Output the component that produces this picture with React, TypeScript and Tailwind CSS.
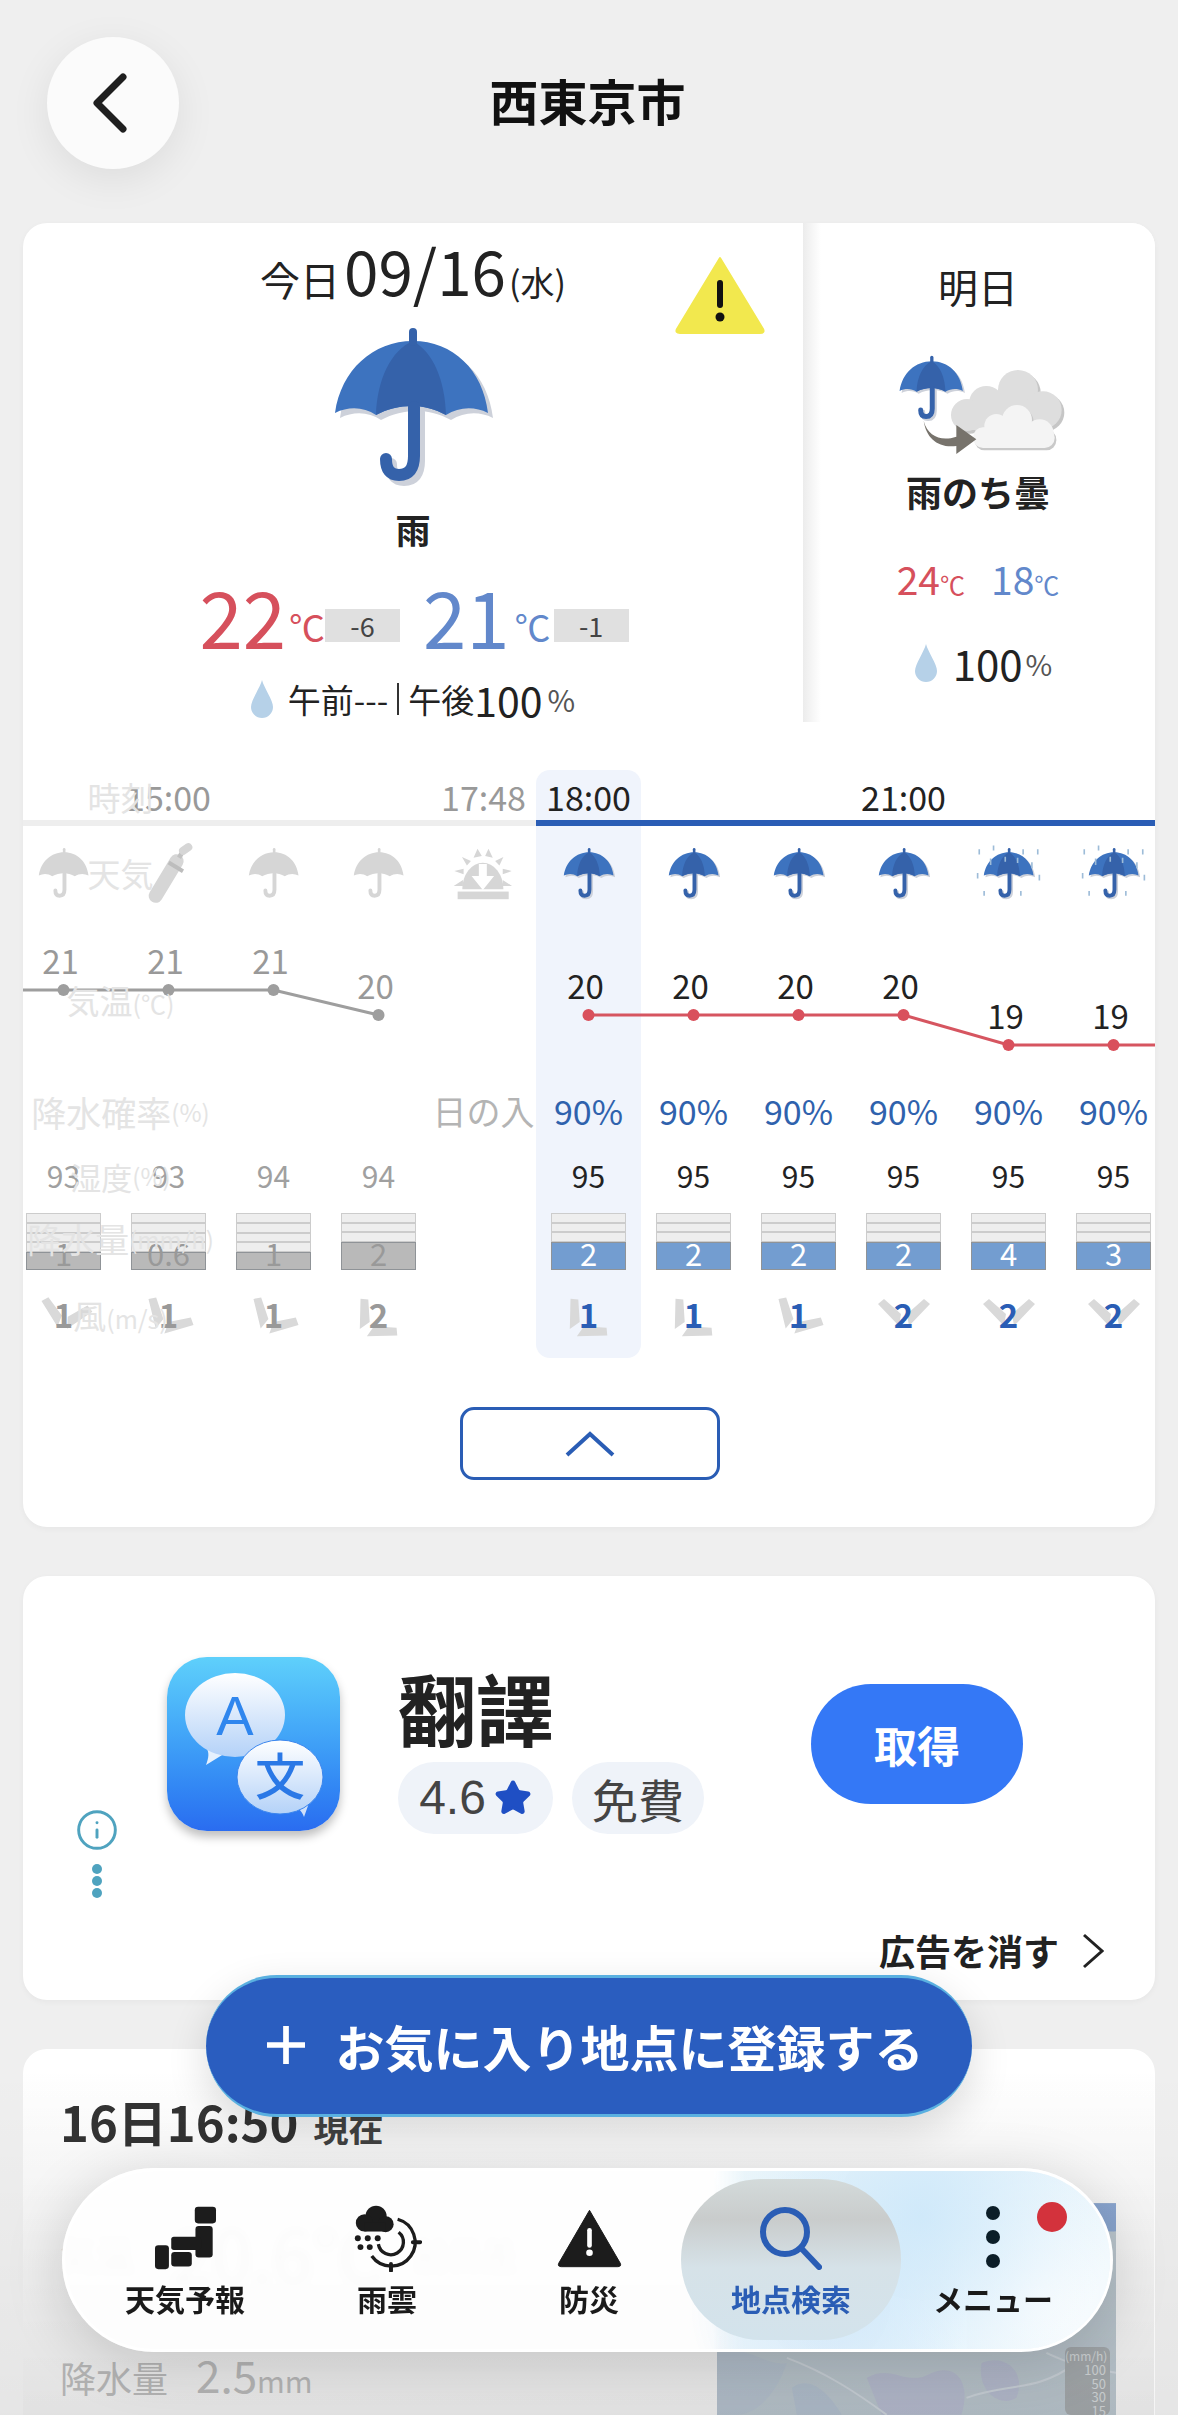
import React from 'react';
import { Star, Info } from 'lucide-react';

type Hour = {
  time?: string;
  icon: 'umbrella' | 'bottle' | 'sunset' | 'storm';
  temp?: number;
  prob?: string;
  humid?: number;
  rain?: string;
  fill?: 1 | 2;
  wind?: number;
  windClass?: string;
  past: boolean;
};

const hours: Hour[] = [
  { icon: 'umbrella', temp: 21, humid: 93, rain: '1', fill: 1, wind: 1, windClass: 'rotate-[12deg] translate-y-[2px]', past: true },
  { time: '15:00', icon: 'bottle', temp: 21, humid: 93, rain: '0.6', fill: 1, wind: 1, windClass: 'rotate-[30deg] -translate-x-[5px] translate-y-[6px]', past: true },
  { icon: 'umbrella', temp: 21, humid: 94, rain: '1', fill: 1, wind: 1, windClass: 'rotate-[30deg] -translate-x-[5px] translate-y-[6px]', past: true },
  { icon: 'umbrella', temp: 20, humid: 94, rain: '2', fill: 2, wind: 2, windClass: 'rotate-[45deg] -translate-x-[10px] translate-y-[9px]', past: true },
  { time: '17:48', icon: 'sunset', prob: '日の入', past: true },
  { time: '18:00', icon: 'umbrella', temp: 20, prob: '90%', humid: 95, rain: '2', fill: 2, wind: 1, windClass: 'rotate-[45deg] -translate-x-[10px] translate-y-[9px]', past: false },
  { icon: 'umbrella', temp: 20, prob: '90%', humid: 95, rain: '2', fill: 2, wind: 1, windClass: 'rotate-[45deg] -translate-x-[10px] translate-y-[9px]', past: false },
  { icon: 'umbrella', temp: 20, prob: '90%', humid: 95, rain: '2', fill: 2, wind: 1, windClass: 'rotate-[30deg] -translate-x-[5px] translate-y-[6px]', past: false },
  { time: '21:00', icon: 'umbrella', temp: 20, prob: '90%', humid: 95, rain: '2', fill: 2, wind: 2, windClass: '', past: false },
  { icon: 'storm', temp: 19, prob: '90%', humid: 95, rain: '4', fill: 2, wind: 2, windClass: '', past: false },
  { icon: 'storm', temp: 19, prob: '90%', humid: 95, rain: '3', fill: 2, wind: 2, windClass: '', past: false },
];

// y of the temperature dot inside the chart row
const dotY = (t: number) => (t === 21 ? 70 : t === 20 ? 95 : 125);

const UmbrellaShapes = ({ grey = false }: { grey?: boolean }) => {
  const canopy = 'M24 103C30 60 62 31 102 31C142 31 172 60 177 103C163 96 148 97 135 105C124 99 112 96 101 96C89 96 76 99 65 105C53 97 38 96 24 103Z';
  const panel = 'M102 31C80 40 66 70 65 105C76 99 89 96 101 96C112 96 124 99 135 105C134 70 122 42 102 31Z';
  const handle = 'M103 97V146Q103 165 88 165Q75 165 75 149';
  const stem = 'M102 22V32';
  if (grey) {
    return (
      <g>
        <path d={canopy} fill="#d6d6d6" />
        <path d={stem} stroke="#d6d6d6" strokeWidth="8" strokeLinecap="round" />
        <path d={handle} fill="none" stroke="#d6d6d6" strokeWidth="12" strokeLinecap="round" />
      </g>
    );
  }
  return (
    <g>
      <path d={canopy} fill="#cdd1da" transform="translate(5 5)" />
      <path d={handle} fill="none" stroke="#cdd1da" strokeWidth="12" strokeLinecap="round" transform="translate(5 5)" />
      <path d={canopy} fill="#3d73bf" />
      <path d={panel} fill="#3562aa" />
      <path d={stem} stroke="#3562aa" strokeWidth="8" strokeLinecap="round" />
      <path d={handle} fill="none" stroke="#3562aa" strokeWidth="12" strokeLinecap="round" />
    </g>
  );
};

const Umbrella = ({ className, grey }: { className: string; grey?: boolean }) => (
  <svg viewBox="0 0 200 190" className={className}>
    <UmbrellaShapes grey={grey} />
  </svg>
);

const StormUmbrella = () => (
  <svg viewBox="0 0 200 190" className="w-[65px] h-[62px]">
    <UmbrellaShapes />
    <g stroke="#9dbcd8" strokeWidth="5">
      <path d="M10 22V38M54 10V26M145 22V38M190 22V38M5 95V112M25 150V165M138 150V165M195 100V118M45 50V70M90 45V60M128 48V64M172 62V80" />
    </g>
  </svg>
);

const Bottle = () => (
  <svg viewBox="10 55 150 200" className="w-[50px] h-[67px]">
    <path d="M45 222L108 118" stroke="#d6d6d6" strokeWidth="42" strokeLinecap="round" />
    <path d="M115 108L126 90" stroke="#c2c2c2" strokeWidth="14" />
    <path d="M127 87L143 76" stroke="#d6d6d6" strokeWidth="24" strokeLinecap="round" />
    <path d="M84 122L127 148" stroke="#bdbdbd" strokeWidth="12" />
  </svg>
);

const Sunset = () => (
  <svg viewBox="935 70 190 165" className="w-[63px] h-[55px]">
    <g fill="#d6d6d6">
      <path d="M966 200A62 80 0 0 1 1090 200Z" />
      <rect x="952" y="207" width="154" height="23" />
      <path d="M1012 78L1000 105L1025 100ZM1045 78L1035 100L1058 105ZM965 103L992 115L980 128ZM1090 103L1065 115L1078 128ZM942 145L970 138L970 155ZM1115 145L1088 138L1088 155ZM940 190L968 172L968 190ZM1116 190L1088 172L1088 190Z" />
    </g>
    <path d="M1016 124H1040V160H1062L1028 202L994 160H1016Z" fill="#fff" />
  </svg>
);

const Drop = ({ className }: { className: string }) => (
  <svg viewBox="0 0 22 38" className={className}>
    <path d="M11 0C13 8 22 20 22 27A11 11 0 0 1 0 27C0 20 9 8 11 0Z" fill="#b6d1e8" />
  </svg>
);

const TomorrowIcon = () => (
  <svg viewBox="0 0 630 390" className="w-[210px] h-[130px]">
    <g transform="translate(50 25) scale(1.24)">
      <UmbrellaShapes />
    </g>
    <g fill="#c6c6c6" transform="translate(8 8)">
      <circle cx="435" cy="150" r="60" />
      <circle cx="340" cy="190" r="52" />
      <circle cx="510" cy="210" r="56" />
      <circle cx="282" cy="225" r="48" />
      <rect x="290" y="190" width="220" height="80" />
    </g>
    <g fill="#dedede">
      <circle cx="435" cy="150" r="60" />
      <circle cx="340" cy="190" r="52" />
      <circle cx="510" cy="210" r="56" />
      <circle cx="282" cy="225" r="48" />
      <rect x="290" y="190" width="220" height="80" />
    </g>
    <g fill="#c9c9c9" transform="translate(5 7)">
      <circle cx="432" cy="240" r="45" />
      <rect x="300" y="262" width="245" height="62" rx="30" />
    </g>
    <g fill="#f4f4f4">
      <circle cx="432" cy="240" r="45" />
      <circle cx="370" cy="258" r="36" />
      <circle cx="500" cy="280" r="42" />
      <rect x="300" y="262" width="245" height="62" rx="30" />
    </g>
    <path d="M152 243C165 290 205 305 250 290L250 255L310 298L250 342L250 318C195 325 160 295 152 243Z" fill="#77736c" />
  </svg>
);

const WindIcon = ({ value, cls, past }: { value: number; cls: string; past: boolean }) => (
  <div className="relative w-[64px] h-[64px] flex items-center justify-center">
    <svg viewBox="0 0 64 64" className={`absolute inset-0 w-[64px] h-[64px] ${cls}`}>
      <path d="M6 18L12 13L29 28L27 40ZM58 18L52 13L35 28L37 40Z" fill="#d9d9d9" />
    </svg>
    <span className={`relative -translate-y-[4px] text-[33px] font-bold leading-none ${past ? 'text-[#999999]' : 'text-[#2a5db5]'}`}>{value}</span>
  </div>
);

const RainBar = ({ hour }: { hour: Hour }) => (
  <div className="relative w-[75px] h-[57px] flex flex-col">
    <div className="flex-1 flex flex-col">
      {Array.from({ length: hour.fill === 1 ? 4 : 3 }).map((_, i) => (
        <div key={i} className="flex-1 bg-[#eeeeee] border border-[#cccccc]" />
      ))}
    </div>
    <div className={`${hour.fill === 1 ? 'h-[18px]' : 'h-[28px]'} border border-[#8f9397] ${hour.past ? 'bg-[#b9b9b9]' : 'bg-[#739dd0]'}`} />
    <div className={`absolute left-0 right-0 bottom-[3px] h-[30px] flex items-center justify-center text-[31px] leading-none ${hour.past ? 'text-[#999999]' : 'text-white'}`}>
      {hour.rain}
    </div>
  </div>
);

const HourColumn = ({ hour, selected }: { hour: Hour; selected: boolean }) => (
  <div className={`w-[105px] shrink-0 flex flex-col items-center ${selected ? 'bg-[#f0f4fc] rounded-[14px]' : ''}`}>
    <div className={`w-full h-[56px] pb-[1px] flex items-end justify-center border-b-[6px] text-[34px] leading-[44px] ${hour.past ? 'border-[#eeeeee] text-[#999999]' : 'border-[#2a5db5] text-[#222222]'}`}>
      {hour.time}
    </div>
    <div className="h-[94px] flex items-center justify-center">
      {hour.icon === 'umbrella' && <Umbrella className="w-[65px] h-[62px]" grey={hour.past} />}
      {hour.icon === 'storm' && <StormUmbrella />}
      {hour.icon === 'bottle' && <Bottle />}
      {hour.icon === 'sunset' && <Sunset />}
    </div>
    <div className="relative w-full h-[165px]">
      {hour.temp !== undefined && (
        <div
          className={`absolute left-0 right-0 -translate-x-[3px] -translate-y-1/2 text-center text-[33px] leading-none ${hour.past ? 'text-[#999999]' : 'text-[#222222]'}`}
          style={{ top: dotY(hour.temp) - 30 }}
        >
          {hour.temp}
        </div>
      )}
    </div>
    <div className={`h-[58px] pb-[6px] flex items-center whitespace-nowrap text-[34px] leading-none ${hour.past ? 'text-[#b4b4b4]' : 'text-[#2f62ad]'}`}>
      {hour.prob}
    </div>
    <div className={`h-[70px] pb-[6px] flex items-center text-[30px] leading-none ${hour.past ? 'text-[#a0a0a0]' : 'text-[#222222]'}`}>
      {hour.humid}
    </div>
    <div className="h-[57px]">{hour.rain && <RainBar hour={hour} />}</div>
    <div className="h-[88px] pt-[16px]">
      {hour.wind !== undefined && <WindIcon value={hour.wind} cls={hour.windClass ?? ''} past={hour.past} />}
    </div>
  </div>
);

const TempChart = () => {
  const x = (i: number) => 52.5 + i * 105;
  return (
    <svg viewBox="0 0 1155 165" className="absolute left-0 top-[150px] w-[1155px] h-[165px] pointer-events-none">
      <polyline points={`0,70 ${x(0)},70 ${x(1)},70 ${x(2)},70 ${x(3)},95`} fill="none" stroke="#9e9e9e" strokeWidth="3" />
      <polyline points={`${x(5)},95 ${x(6)},95 ${x(7)},95 ${x(8)},95 ${x(9)},125 ${x(10)},125 1155,125`} fill="none" stroke="#d65560" strokeWidth="3" />
      {[0, 1, 2, 3].map((i) => (
        <circle key={i} cx={x(i)} cy={dotY(hours[i].temp ?? 0)} r="6" fill="#9e9e9e" />
      ))}
      {[5, 6, 7, 8, 9, 10].map((i) => (
        <circle key={i} cx={x(i)} cy={dotY(hours[i].temp ?? 0)} r="6" fill="#d9505c" />
      ))}
    </svg>
  );
};

// sticky row labels, they sit faintly on top of the scrolled columns
const RowLabels = () => (
  <div className="absolute left-0 top-[48px] w-[195px] flex flex-col items-center text-[#e4e4e4] pointer-events-none leading-none whitespace-nowrap">
    <div className="h-[56px] pb-[12px] flex items-end text-[33px]">時刻</div>
    <div className="h-[94px] flex items-center text-[33px]">天気</div>
    <div className="h-[165px] pt-[64px] text-[33px]">
      気温<span className="text-[25px]">(℃)</span>
    </div>
    <div className="h-[58px] pb-[5px] flex items-center text-[35px]">
      降水確率<span className="text-[24px]">(%)</span>
    </div>
    <div className="h-[70px] pb-[4px] flex items-center text-[31px]">
      湿度<span className="text-[24px]">(%)</span>
    </div>
    <div className="h-[57px] pb-[5px] flex items-center text-[34px]">
      降水量<span className="text-[24px]">(mm/h)</span>
    </div>
    <div className="h-[88px] pt-[29px] text-[33px]">
      風<span className="text-[25px]">(m/s)</span>
    </div>
  </div>
);

const ForecastIcon = () => (
  <svg viewBox="70 80 190 195" className="w-[63px] h-[65px]" fill="#1c1c1c">
    <rect x="193" y="82" width="64" height="50" rx="10" />
    <rect x="195" y="140" width="52" height="95" rx="10" />
    <rect x="122" y="172" width="90" height="40" rx="8" />
    <rect x="122" y="218" width="62" height="44" rx="10" />
    <rect x="73" y="198" width="42" height="72" rx="10" />
  </svg>
);

const RadarIcon = () => (
  <svg viewBox="665 75 210 205" className="w-[70px] h-[68px]">
    <g fill="#1c1c1c">
      <circle cx="737" cy="112" r="32" />
      <circle cx="702" cy="132" r="26" />
      <circle cx="766" cy="136" r="24" />
      <rect x="702" y="130" width="64" height="28" />
      <circle cx="682" cy="178" r="9" />
      <circle cx="712" cy="178" r="9" />
      <circle cx="742" cy="178" r="9" />
      <circle cx="690" cy="205" r="9" />
      <circle cx="718" cy="205" r="9" />
    </g>
    <g fill="none" stroke="#1c1c1c" strokeWidth="10">
      <path d="M802 121A72 72 0 1 1 724 232" />
      <path d="M805 160A38 38 0 1 1 744 196" />
      <path d="M848 190H870M782 256V276" strokeLinecap="round" strokeWidth="12" />
    </g>
  </svg>
);

const WarnIcon = () => (
  <svg viewBox="1275 88 200 178" className="w-[67px] h-[59px]">
    <path d="M1375 92L1468 252Q1472 262 1460 262H1290Q1278 262 1282 252Z" fill="#1c1c1c" stroke="#1c1c1c" strokeLinejoin="round" strokeWidth="3" />
    <rect x="1368" y="145" width="14" height="60" rx="7" fill="#fff" />
    <circle cx="1375" cy="220" r="10" fill="#fff" />
  </svg>
);

const SearchIcon = () => (
  <svg viewBox="0 0 66 66" className="w-[66px] h-[66px] -ml-[5px] -mt-[3px]" fill="none" stroke="#2a5db5" strokeWidth="6" strokeLinecap="round">
    <circle cx="29" cy="28" r="22" />
    <path d="M45 44L63 63" />
  </svg>
);

const navItems = [
  { label: '天気予報', icon: <ForecastIcon /> },
  { label: '雨雲', icon: <RadarIcon /> },
  { label: '防災', icon: <WarnIcon /> },
  { label: '地点検索', icon: <SearchIcon />, active: true },
  {
    label: 'メニュー',
    icon: (
      <div className="flex flex-col gap-[10px] -mt-[2px]">
        <span className="w-[14px] h-[14px] rounded-full bg-[#0c1e28]" />
        <span className="w-[14px] h-[14px] rounded-full bg-[#0c1e28]" />
        <span className="w-[14px] h-[14px] rounded-full bg-[#0c1e28]" />
      </div>
    ),
  },
];

const BottomNav = () => (
  <div className="absolute left-[62px] top-[2168px] w-[1051px] h-[184px] rounded-[92px] border-[3px] border-white/90 bg-white/90 backdrop-blur-[3px] shadow-[0_10px_60px_rgba(0,0,0,0.16)] overflow-hidden">
    <div className="absolute inset-0 bg-[linear-gradient(90deg,rgba(234,245,250,0)_62%,rgba(234,245,250,0.95)_65%,rgba(232,245,252,1)_100%)]" />
    <div className="absolute inset-0 bg-[radial-gradient(circle_at_82%_25%,rgba(205,232,250,0.9),rgba(205,232,250,0)_22%),radial-gradient(circle_at_73%_75%,rgba(212,232,250,0.9),rgba(212,232,250,0)_18%),radial-gradient(circle_at_93%_70%,rgba(255,255,255,0.9),rgba(255,255,255,0)_16%)]" />
    <div className="relative flex h-full pl-[19px]">
      {navItems.map((item) => (
        <div key={item.label} className="relative w-[202px] flex flex-col items-center pt-[34px]">
          {item.active && (
            <div className="absolute left-[-9px] top-[8px] w-[220px] h-[161px] rounded-[80px] bg-[linear-gradient(180deg,#d3dada,#c9cccc_25%,#d6e2e8_55%,#d3e3ec)]" />
          )}
          <div className="relative h-[66px] flex items-center justify-center">{item.icon}</div>
          <div className={`relative mt-[7px] text-[30px] font-bold leading-[40px] ${item.active ? 'text-[#2a5db5]' : 'text-[#1a1a1a]'}`}>{item.label}</div>
        </div>
      ))}
    </div>
    <span className="absolute left-[972px] top-[31px] w-[30px] h-[30px] rounded-full bg-[#d3323c]" />
  </div>
);

const RadarMap = () => (
  <div className="relative w-[400px] h-[212px] mt-[29px] overflow-hidden bg-[#c4d0d8]">
    <svg viewBox="0 0 400 212" className="absolute inset-0 w-full h-full">
      <path d="M0 150C30 140 50 165 70 160C60 190 40 212 20 212H0Z" fill="#bfccd9" />
      <path d="M75 185C95 170 115 195 125 212H80Z" fill="#bccad9" />
      <path d="M150 175C175 160 190 185 215 170C240 160 255 180 245 212H165Z" fill="#c0c6da" />
      <path d="M265 160C290 150 310 170 300 195C285 205 260 190 265 160Z" fill="#c0c6da" />
      <path d="M340 0H400V28C380 30 350 20 340 0Z" fill="#8facd8" />
      <path d="M70 155C110 170 140 190 170 212M250 195C290 180 320 190 360 160M330 150C350 160 370 165 400 170" fill="none" stroke="#d7dfe6" strokeWidth="2" />
    </svg>
    <div className="absolute right-[6px] top-[144px] w-[45px] h-[68px] rounded-[6px] bg-[#adb2b5] text-[13px] leading-[13.5px] text-[#dfe2e4] text-right pr-[4px] pt-[2px]">
      <div className="text-[12px] leading-[14px]">(mm/h)</div>
      <div>100</div>
      <div>50</div>
      <div>30</div>
      <div>15</div>
    </div>
  </div>
);

const TranslateIcon = () => (
  <div className="w-[173px] h-[174px] rounded-[40px] bg-gradient-to-b from-[#5fd0fb] to-[#2a6cf0] shadow-[0_6px_10px_rgba(0,0,0,0.25)]">
    <svg viewBox="0 0 173 174" className="w-[173px] h-[174px]">
      <defs>
        <linearGradient id="bubble" x1="0" y1="0" x2="0" y2="1">
          <stop offset="0" stopColor="#ffffff" />
          <stop offset="1" stopColor="#b4d2f8" />
        </linearGradient>
      </defs>
      <path d="M39 108C42 100 42 96 40 92L60 95Z" fill="#e6f1fd" />
      <ellipse cx="68" cy="58" rx="50" ry="42" fill="url(#bubble)" />
      <text x="68" y="78" textAnchor="middle" fontSize="56" fontFamily="'Liberation Sans', sans-serif" fill="#2f86ee">A</text>
      <path d="M137 160C135 154 130 150 126 146L142 146Z" fill="#cfe0fa" />
      <ellipse cx="113" cy="120" rx="43" ry="37" fill="url(#bubble)" stroke="#3b86ee" strokeWidth="1" />
      <text x="113" y="138" textAnchor="middle" fontSize="50" fontWeight="500" fontFamily="'Noto Sans CJK JP', sans-serif" fill="#2a78e6">文</text>
    </svg>
  </div>
);

export default function App() {
  return (
    <div className="relative w-[1178px] h-[2415px] overflow-hidden bg-[#efefef] font-['Noto_Sans_CJK_JP','Noto_Sans',sans-serif] text-[#222222]">
      {/* Header */}
      <div className="h-[223px] pt-[37px] pl-[47px] grid grid-cols-[1fr_auto_1fr] items-start">
        <div className="w-[132px] h-[132px] rounded-full bg-[#fbfbfb] shadow-[0_10px_40px_rgba(0,0,0,0.08)] flex items-center justify-center">
          <svg viewBox="0 0 40 64" className="w-[40px] h-[64px] -ml-[8px]" fill="none" stroke="#1f1f1f" strokeWidth="7" strokeLinecap="round" strokeLinejoin="round">
            <path d="M34 6L8 32L34 58" />
          </svg>
        </div>
        <h1 className="h-[132px] pb-[6px] -ml-[50px] flex items-center text-[49px] font-bold text-[#111111]">西東京市</h1>
        <div />
      </div>

      {/* Forecast card */}
      <section className="mx-[23px] h-[1304px] rounded-[24px] bg-white overflow-hidden shadow-[0_2px_6px_rgba(0,0,0,0.04)]">
        <div className="flex h-[499px]">
          <div className="relative w-[780px] flex flex-col items-center">
            <div className="mt-[15px] h-[60px] flex items-baseline leading-none whitespace-nowrap">
              <span className="text-[40px]">今日</span>
              <span className="text-[62px] ml-[4px]">09/16</span>
              <span className="text-[34px] ml-[3px]">(水)</span>
            </div>
            <Umbrella className="mt-[12px] -ml-[4px] w-[200px] h-[190px]" />
            <div className="mt-[7px] h-[44px] text-[35px] font-bold leading-[44px]">雨</div>
            <div className="mt-[24px] ml-[2px] h-[80px] flex items-end whitespace-nowrap">
              <span className="text-[78px] leading-[80px] text-[#d6505c]">22</span>
              <span className="text-[36px] leading-none mb-[11px] ml-[3px] text-[#d6505c] w-[36px]">℃</span>
              <span className="mb-[13px] w-[75px] h-[33px] bg-[#e0e0e0] flex items-center justify-center text-[27px] leading-none text-[#444444]">-6</span>
              <span className="ml-[23px] text-[78px] leading-[80px] text-[#6288cb]">21</span>
              <span className="text-[36px] leading-none mb-[11px] ml-[5px] text-[#6288cb] w-[36px]">℃</span>
              <span className="mb-[13px] ml-[3px] w-[75px] h-[33px] bg-[#e0e0e0] flex items-center justify-center text-[27px] leading-none text-[#444444]">-1</span>
            </div>
            <div className="mt-[22px] h-[44px] flex items-center whitespace-nowrap leading-none">
              <Drop className="w-[22px] h-[38px]" />
              <span className="ml-[15px] text-[33px]">午前---</span>
              <span className="mx-[9px] w-[2px] h-[32px] bg-[#333333]" />
              <span className="text-[33px]">午後</span>
              <span className="text-[41px]">100</span>
              <span className="ml-[5px] text-[30px] text-[#555555]">%</span>
            </div>
            <svg viewBox="0 0 90 80" className="absolute left-[652px] top-[32px] w-[90px] h-[80px]">
              <path d="M45 3L88 74Q90 78 85 78H5Q0 78 2 74Z" fill="#f2e84e" stroke="#f2e84e" strokeWidth="2" strokeLinejoin="round" />
              <rect x="42" y="25" width="6" height="28" rx="3" fill="#111111" />
              <circle cx="45" cy="62" r="4.5" fill="#111111" />
            </svg>
          </div>
          <div className="flex-1 pr-[2px] flex flex-col items-center bg-[linear-gradient(90deg,#ececec,#ffffff_18px)]">
            <div className="mt-[38px] h-[50px] text-[40px] leading-[50px]">明日</div>
            <div className="mt-[29px]">
              <TomorrowIcon />
            </div>
            <div className="-mt-[1px] h-[44px] text-[36px] font-bold leading-[44px]">雨のち曇</div>
            <div className="mt-[40px] h-[50px] flex items-baseline whitespace-nowrap leading-[50px]">
              <span className="text-[39px] text-[#d6505c]">24</span>
              <span className="text-[25px] text-[#d6505c]">℃</span>
              <span className="ml-[26px] text-[39px] text-[#6288cb]">18</span>
              <span className="text-[25px] text-[#6288cb]">℃</span>
            </div>
            <div className="mt-[35px] ml-[11px] h-[50px] flex items-center whitespace-nowrap leading-none">
              <Drop className="w-[22px] h-[38px]" />
              <span className="ml-[16px] text-[42px]">100</span>
              <span className="ml-[3px] text-[29px] text-[#555555]">%</span>
            </div>
          </div>
        </div>

        {/* Hourly table */}
        <div className="relative pt-[48px]">
          <div className="relative flex -ml-[12px] w-[1155px]">
            {hours.map((hour, i) => (
              <HourColumn key={i} hour={hour} selected={i === 5} />
            ))}
            <TempChart />
          </div>
          <RowLabels />
        </div>

        <div className="mt-[49px] flex justify-center pl-[2px]">
          <button className="w-[260px] h-[73px] rounded-[14px] border-[3px] border-[#2a5db5] bg-white flex items-center justify-center">
            <svg viewBox="0 0 50 26" className="w-[50px] h-[26px]" fill="none" stroke="#2a5db5" strokeWidth="4">
              <path d="M2 24L25 3L48 24" />
            </svg>
          </button>
        </div>
      </section>

      {/* Ad card */}
      <section className="relative mx-[23px] mt-[49px] h-[424px] rounded-[24px] bg-white flex flex-col shadow-[0_2px_6px_rgba(0,0,0,0.04)]">
        <div className="flex items-start pt-[81px] pl-[144px] pr-[132px]">
          <TranslateIcon />
          <div className="ml-[58px] flex flex-col">
            <div className="h-[72px] mt-[14px] text-[78px] font-bold leading-[72px] text-[#222222] font-['Noto_Sans_CJK_TC',sans-serif]">翻譯</div>
            <div className="mt-[19px] flex gap-[19px]">
              <div className="h-[72px] w-[155px] rounded-full bg-[#eff3f9] flex items-center justify-center gap-[8px] text-[48px] leading-none text-[#444444] font-['Liberation_Sans',sans-serif]">
                4.6
                <Star className="w-[38px] h-[38px]" fill="#1f4fc4" stroke="#1f4fc4" />
              </div>
              <div className="h-[72px] w-[132px] rounded-full bg-[#eff3f9] flex items-center justify-center text-[46px] leading-none text-[#444444]">免費</div>
            </div>
          </div>
          <button className="ml-auto mt-[27px] w-[212px] h-[120px] rounded-full bg-[#3478f6] text-white text-[43px] font-bold leading-none">取得</button>
        </div>
        <div className="absolute left-[52px] top-[232px] flex flex-col items-center">
          <Info className="w-[44px] h-[44px] text-[#4fa3bf]" strokeWidth={1.6} />
          <div className="mt-[12px] flex flex-col gap-[2px]">
            <span className="w-[10px] h-[10px] rounded-full bg-[#4fa3bf]" />
            <span className="w-[10px] h-[10px] rounded-full bg-[#4fa3bf]" />
            <span className="w-[10px] h-[10px] rounded-full bg-[#4fa3bf]" />
          </div>
        </div>
        <div className="mt-auto mb-[27px] mr-[51px] h-[40px] flex items-center justify-end whitespace-nowrap">
          <span className="pb-[6px] text-[36px] font-bold leading-none text-[#222222]">広告を消す</span>
          <svg viewBox="0 0 22 36" className="ml-[23px] w-[22px] h-[36px] -mt-[4px]" fill="none" stroke="#222222" strokeWidth="3">
            <path d="M2 2L20 18L2 34" />
          </svg>
        </div>
      </section>

      {/* Current conditions card, mostly behind the nav */}
      <section className="mx-[23px] mt-[49px] h-[400px] rounded-[24px] bg-white pl-[37px] pr-[39px] pt-[46px]">
        <div className="flex items-baseline h-[52px] leading-[52px] whitespace-nowrap">
          <span className="text-[49px] font-bold text-[#333333]">16日16:50</span>
          <span className="ml-[15px] text-[35px] font-bold text-[#444444]">現在</span>
        </div>
        <div className="flex items-start mt-[27px]">
          <div className="w-[658px] relative">
            <div className="flex items-center h-[100px] mt-[28px]">
              <span className="text-[36px] text-[#e4e4e4]">気温</span>
              <span className="ml-[40px] text-[72px] leading-none text-[#e0e0e0]">20.6℃</span>
              <span className="ml-[30px] text-[34px] text-[#e4e4e4]">前日差</span>
            </div>
            <div className="flex items-baseline mt-[50px] leading-none text-[#c6c6c6]">
              <span className="text-[36px]">降水量</span>
              <span className="ml-[28px] text-[44px]">2.5</span>
              <span className="text-[30px]">mm</span>
            </div>
          </div>
          <RadarMap />
        </div>
      </section>

      {/* bottom fade behind the floating controls */}
      <div className="absolute left-0 right-0 bottom-0 h-[350px] bg-gradient-to-b from-transparent to-black/4 pointer-events-none" />
      <div className="absolute left-[23px] right-[24px] bottom-0 h-[350px] bg-gradient-to-b from-transparent to-black/8 pointer-events-none" />

      <button className="absolute left-[206px] top-[1975px] w-[766px] h-[142px] pl-[13px] rounded-[71px] bg-[#2a5dbf] border-t-[3px] border-b-[3px] border-[#5ab0e0] shadow-[0_14px_40px_rgba(0,0,0,0.14)] flex items-center justify-center text-white text-[49px] font-bold leading-none whitespace-nowrap pb-[2px]">
        <svg viewBox="0 0 40 40" className="w-[38px] h-[38px] mr-[30px]" fill="none" stroke="#ffffff" strokeWidth="6">
          <path d="M20 0V40M0 20H40" />
        </svg>
        お気に入り地点に登録する
      </button>

      <BottomNav />
    </div>
  );
}
